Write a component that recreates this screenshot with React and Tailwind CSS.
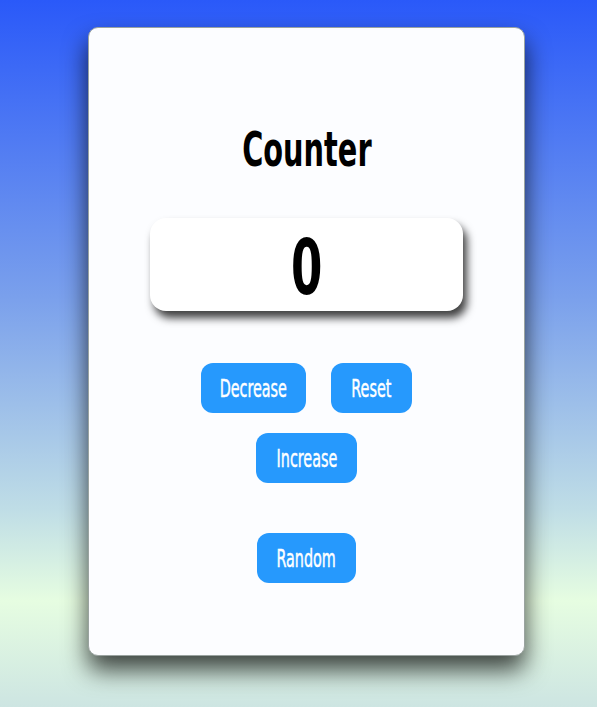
export default function App() {
  const font = { fontFamily: '"Liberation Sans Narrow", "DejaVu Sans Condensed", "Liberation Sans", sans-serif' };
  const btn = "h-[50px] rounded-[12px] bg-[#2699fd] text-white text-[21px] flex items-center justify-center";
  const lbl = "inline-block scale-x-[0.76] scale-y-[1.15] translate-y-[2px] [-webkit-text-stroke:0.4px_white]";
  return (
    <div className="w-[597px] h-[707px] overflow-hidden bg-[linear-gradient(180deg,#2a59f9_0%,#7aa0ec_42%,#bfdde6_72%,#e6fde1_85%,#cde5e2_100%)] pt-[27px] pl-[88px]" style={font}>
      <div className="w-[437px] h-[629px] rounded-[10px] bg-[#fcfdff] border border-[#9aa3a0] shadow-[0_14px_24px_rgba(0,0,0,0.72)] flex flex-col items-center">
        <h1 className="mt-[97px] h-[48px] flex items-center text-[40px] font-bold text-black leading-none">
          <span className="inline-block scale-x-[0.8] scale-y-[1.2]">Counter</span>
        </h1>
        <div className="mt-[45px] w-[313px] h-[93px] rounded-[16px] bg-white shadow-[4px_7px_9px_rgba(0,0,0,0.75)] flex items-center justify-center">
          <span className="inline-block text-[66px] font-bold text-black leading-none scale-x-[0.76] scale-y-[1.15] translate-y-[4px]">0</span>
        </div>
        <div className="mt-[52px] flex gap-[25px]">
          <button className={btn + " w-[105px]"} style={font}><span className={lbl}>Decrease</span></button>
          <button className={btn + " w-[81px]"} style={font}><span className={lbl}>Reset</span></button>
        </div>
        <button className={btn + " w-[101px] mt-[20px]"} style={font}><span className={lbl}>Increase</span></button>
        <button className={btn + " w-[99px] mt-[50px]"} style={font}><span className={lbl}>Random</span></button>
      </div>
    </div>
  );
}
